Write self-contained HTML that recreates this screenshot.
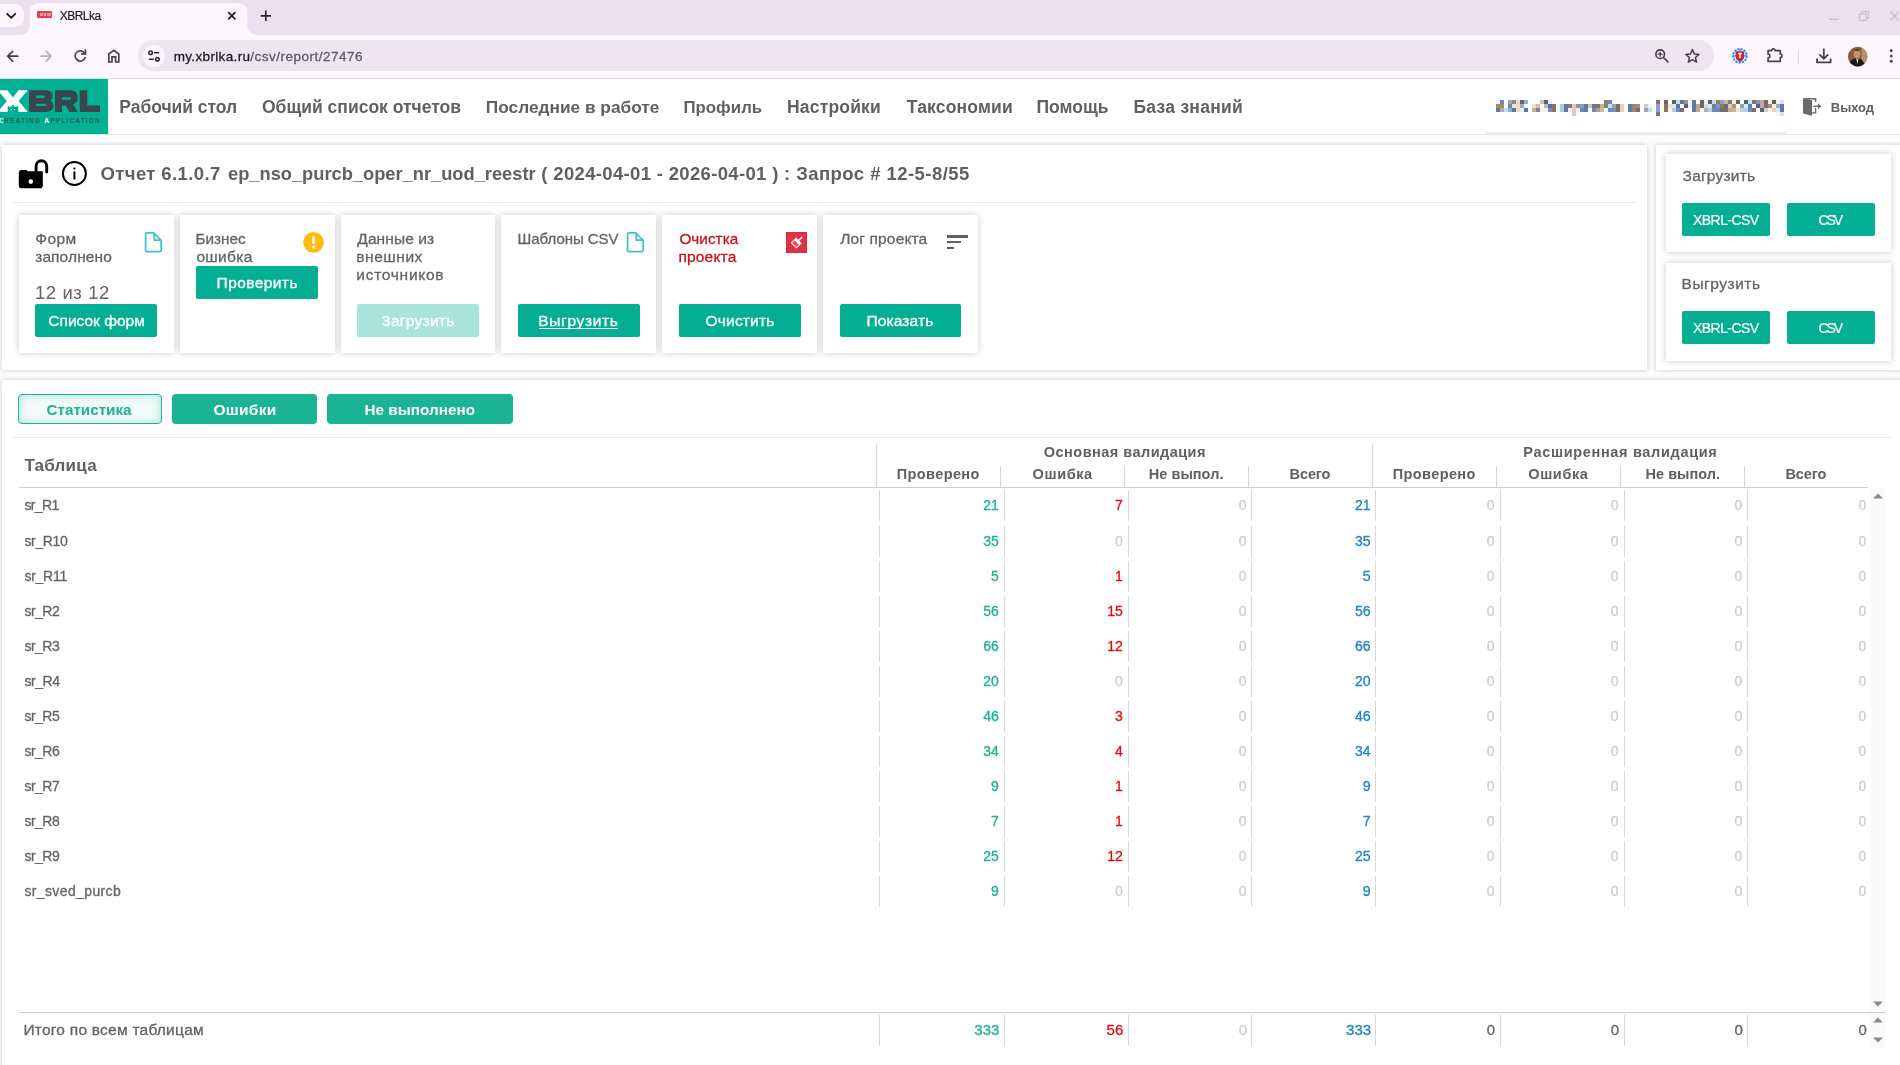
<!DOCTYPE html>
<html lang="ru"><head><meta charset="utf-8"><title>XBRLka</title>
<style>
html,body{margin:0;padding:0}
body{width:1900px;height:1065px;overflow:hidden;position:relative;background:#fdfdfd;
 font-family:"Liberation Sans",sans-serif;}
.t{position:absolute;white-space:nowrap;line-height:1;}
#root{position:absolute;left:0;top:0;width:1900px;height:1065px;will-change:transform}
.abs{position:absolute}
svg{position:absolute;overflow:visible}
.card{position:absolute;background:#fff;box-shadow:0 0 7px rgba(0,0,0,.21)}
.panel{position:absolute;background:#fff;box-shadow:0 0 5px rgba(0,0,0,.21)}
.btn{position:absolute;background:#03ae93;border-radius:2px}
</style></head>
<body>
<div id="root">
<!-- browser chrome -->
<div style="position:absolute;left:0px;top:0px;width:1900px;height:34.8px;background:#ebe0f0"></div>
<div style="position:absolute;left:0px;top:34.8px;width:1900px;height:43.7px;background:#fcf7fe"></div>
<div style="position:absolute;left:0px;top:78px;width:1900px;height:1px;background:#e4dbe8"></div>
<div style="position:absolute;left:-8px;top:3.5px;width:31.5px;height:23.5px;background:#fcf7fe;border-radius:9px"></div>
<svg style="left:0;top:0" width="30" height="34"><path d="M7.2 13.8 L11.2 17.8 L15.2 13.8" fill="none" stroke="#1f1b22" stroke-width="1.9" stroke-linecap="round" stroke-linejoin="round"/></svg>
<svg style="left:0;top:0" width="300" height="36"><path d="M19.5 34.9 C25.5 34.9 29.7 31.4 29.7 25.9 L29.7 12 C29.7 6.5 33.5 3 39 3 L238 3 C243.5 3 247.3 6.5 247.3 12 L247.3 25.9 C247.3 31.4 251.5 34.9 257.5 34.9 Z" fill="#fcf7fe"/></svg>
<div style="position:absolute;left:36.9px;top:11.3px;width:15.2px;height:6.3px;background:#e2404e;border-radius:1.2px"></div>
<div style="position:absolute;left:39.6px;top:12.9px;width:3.4px;height:3.6px;background:#f3a6ad;opacity:.85"></div>
<div style="position:absolute;left:43.9px;top:12.9px;width:2.2px;height:3.6px;background:#f6c2c7;opacity:.9"></div>
<div style="position:absolute;left:47px;top:12.9px;width:3.6px;height:3.6px;background:#f1979f;opacity:.85"></div>
<div style="position:absolute;left:37.7px;top:18.2px;width:1.3px;height:1.3px;background:#a9afb8;border-radius:.6px"></div>
<div style="position:absolute;left:41.7px;top:18.2px;width:1.3px;height:1.3px;background:#a9afb8;border-radius:.6px"></div>
<div style="position:absolute;left:45.6px;top:18.2px;width:1.3px;height:1.3px;background:#a9afb8;border-radius:.6px"></div>
<div style="position:absolute;left:49.6px;top:18.2px;width:1.3px;height:1.3px;background:#a9afb8;border-radius:.6px"></div>
<span class="t" style="left:59.80px;top:10px;font-size:12px;color:#1f1b22;letter-spacing:-0.550px;-webkit-text-stroke:.2px #1f1b22;">XBRLka</span>
<svg style="left:0;top:0" width="260" height="34"><path d="M228.2 12.2 L235.4 19.4 M235.4 12.2 L228.2 19.4" stroke="#1f1b22" stroke-width="1.7" stroke-linecap="butt"/></svg>
<svg style="left:0;top:0" width="300" height="34"><path d="M260.6 15.8 H271 M265.8 10.6 V21" stroke="#2a252d" stroke-width="1.7"/></svg>
<svg style="left:0;top:0" width="1900" height="34" fill="none" stroke="#c9c1cd" stroke-width="1.3"><path d="M1829 19.3 H1839"/><path d="M1859.5 13.8 H1866 V20.3 H1859.5 Z M1862 13.5 V11.5 H1868.5 V18 H1866.3"/><path d="M1890.3 11.8 L1899 20.4 M1899 11.8 L1890.3 20.4" stroke-width="1.5"/></svg>
<svg style="left:0;top:34px" width="140" height="44" fill="none" stroke-linecap="round" stroke-linejoin="round"><path d="M17.8 22.2 H7.8 M12.6 17.3 L7.6 22.2 L12.6 27.1" stroke="#474049" stroke-width="1.7"/><path d="M41 22.2 H51 M46.2 17.3 L51.2 22.2 L46.2 27.1" stroke="#b7afbb" stroke-width="1.7"/><path d="M84.7 19.4 A5.1 5.1 0 1 0 85.1 23.6" stroke="#474049" stroke-width="1.7"/><path d="M85.5 16.2 V19.9 H81.8" stroke="#474049" stroke-width="1.7"/><path d="M108.8 28 V20 L113.8 16.2 L118.8 20 V28 H115.6 V22.8 H112 V28 Z" stroke="#474049" stroke-width="1.7" stroke-linejoin="miter"/></svg>
<div style="position:absolute;left:138.3px;top:40.4px;width:1575.6px;height:30.2px;background:#ede5f2;border-radius:15.1px"></div>
<div style="position:absolute;left:142.5px;top:45.2px;width:22px;height:22px;background:#fcf7fe;border-radius:11px"></div>
<svg style="left:142.5px;top:45.2px" width="22" height="22" fill="none" stroke="#2a252d" stroke-width="1.5" stroke-linecap="round"><circle cx="7.6" cy="7.8" r="1.8"/><path d="M11.6 7.8 H15.6"/><circle cx="14.4" cy="14.2" r="1.8"/><path d="M6.4 14.2 H10.4"/></svg>
<span class="t" style="left:173.70px;top:50px;font-size:13.5px;color:#1f1b22;-webkit-text-stroke:.3px #1f1b22;letter-spacing:0.345px;">my.xbrlka.ru</span>
<span class="t" style="left:250.30px;top:50px;font-size:13.5px;color:#5f5a63;-webkit-text-stroke:.3px #5f5a63;letter-spacing:0.487px;">/csv/report/27476</span>
<svg style="left:1650px;top:44px" width="24" height="24" fill="none" stroke="#474049" stroke-width="1.6" stroke-linecap="round"><circle cx="10.2" cy="10.2" r="4.3"/><path d="M13.5 13.5 L17.9 17.9"/><path d="M8.2 10.2 H12.2 M10.2 8.2 V12.2" stroke-width="1.3"/></svg>
<svg style="left:1680px;top:44px" width="24" height="24" fill="none" stroke="#474049" stroke-width="1.5" stroke-linejoin="round"><path d="M12.4 5.5 L14.3 9.9 L19 10.4 L15.4 13.5 L16.5 18.2 L12.4 15.7 L8.3 18.2 L9.4 13.5 L5.8 10.4 L10.5 9.9 Z"/></svg>
<svg style="left:1730px;top:46px" width="20" height="20"><circle cx="9.9" cy="9.8" r="6.9" fill="#dff0ff" stroke="#1c8ef4" stroke-width="1.8" stroke-dasharray="2.2 1.1"/><path d="M3 9.8 H17 M9.9 3 V17" stroke="#1c8ef4" stroke-width="1.2"/><path d="M5.6 5.2 H14.2 V10.2 C14.2 13.2 12.2 14.8 9.9 15.8 C7.6 14.8 5.6 13.2 5.6 10.2 Z" fill="#d51f2d"/><path d="M8 7.6 H11.8 M9.9 7.6 V12.2" stroke="#fff" stroke-width="1.5"/></svg>
<svg style="left:1764px;top:46px" width="20" height="20" fill="none" stroke="#474049" stroke-width="1.7" stroke-linejoin="round"><path d="M4.1 4.6 H7.8 C7.8 2.2 11 2.2 11 4.6 H16.2 V8 C18.6 8 18.6 11.6 16.2 11.6 V15.4 H4.1 V11.8 C6.4 11.8 6.4 8 4.1 8 Z"/></svg>
<div style="position:absolute;left:1798px;top:49px;width:1.2px;height:14.5px;background:#e3cdf0"></div>
<svg style="left:1813px;top:45px" width="22" height="22" fill="none" stroke="#474049" stroke-width="1.8" stroke-linejoin="round"><path d="M10.8 3.4 V13.6 M6.4 9.4 L10.8 13.8 L15.2 9.4"/><path d="M4 13.6 V17.4 H17.6 V13.6"/></svg>
<svg style="left:1847px;top:46px" width="22" height="22"><defs><clipPath id="av"><circle cx="10.7" cy="10.6" r="9.8"/></clipPath></defs><g clip-path="url(#av)"><rect width="22" height="22" fill="#8a5a3c"/><rect x="14.5" y="0" width="8" height="22" fill="#b8916c"/><ellipse cx="10" cy="8" rx="3.4" ry="4.2" fill="#c8906c"/><path d="M6.5 6 C7 2.5 13 2.5 13.5 6 L13 4.8 L7 4.8Z" fill="#3a2418"/><path d="M1 22 C2 14 6 12.5 10 12.5 C14 12.5 17 14 18 22 Z" fill="#1c1513"/><path d="M9.2 12.6 L10.4 18 L11.6 12.8Z" fill="#e8e2da"/></g></svg>
<svg style="left:1885px;top:46px" width="12" height="22" fill="#474049"><circle cx="6.2" cy="4.8" r="1.45"/><circle cx="6.2" cy="10.1" r="1.45"/><circle cx="6.2" cy="15.3" r="1.45"/></svg>
<!-- site header -->
<div style="position:absolute;left:0px;top:79px;width:1900px;height:55.5px;background:#fff"></div>
<div style="position:absolute;left:0px;top:134px;width:1900px;height:1px;background:#e4e6e8"></div>
<div style="position:absolute;left:0px;top:78.8px;width:108px;height:55.2px;background:#00b092"></div>
<svg style="left:0;top:0" width="110" height="136"><path d="M-2.4 90.2 H7.4 L13 97.6 L18.4 90.2 H27.8 L18.7 101.1 L27.8 112 H18.4 L13 104.6 L7.4 112 H-2.4 L6.9 101.1 Z" fill="#fff"/><path d="M7.7 112 V105.4 L10 107 H15.8 L18.3 105.4 V112 Z" fill="#00b092"/><circle cx="11.4" cy="109.6" r=".6" fill="#fff"/><circle cx="14.4" cy="109.6" r=".6" fill="#fff"/><path fill-rule="evenodd" d="M29 90.2 H45.5 C50.2 90.2 52.6 92.6 52.6 95.8 C52.6 98 51.6 99.6 49.8 100.5 C52.2 101.3 53.5 103.2 53.5 105.8 C53.5 109.6 50.8 112 46 112 H29 Z M36 95.6 H44 C45.2 95.6 45.2 97.9 44 97.9 H36 Z M36 103.8 H45 C46.4 103.8 46.4 106.1 45 106.1 H36 Z" fill="#37474f"/><path fill-rule="evenodd" d="M55 90.2 H70.4 C75.4 90.2 77.8 93.6 77.8 97.6 C77.8 101 76.2 103.4 73.2 104.5 L78 112 H69.6 L65.6 105.4 H62 V112 H55 Z M62 97.2 H70 C71.6 97.2 71.6 99.8 70 99.8 H62 Z" fill="#37474f"/><path d="M79.7 90.2 H87.3 V105.4 H100 V112 H79.7 Z" fill="#37474f"/></svg>
<span class="t" style="left:-0.80px;top:118px;font-size:6.4px;color:#e9f7f4;font-weight:700;">C</span>
<span class="t" style="left:4.00px;top:118px;font-size:6.5px;color:#2f5a55;font-weight:700;letter-spacing:1.215px;">REATING</span>
<span class="t" style="left:44.20px;top:118px;font-size:6.8px;color:#ffffff;font-weight:700;">A</span>
<span class="t" style="left:50.50px;top:118px;font-size:6.5px;color:#2f5a55;font-weight:700;letter-spacing:1.146px;">PPLICATION</span>
<span class="t" style="left:119.30px;top:99px;font-size:17.5px;color:#5e6163;font-weight:700;letter-spacing:-0.037px;">Рабочий стол</span>
<span class="t" style="left:262.00px;top:99px;font-size:17.5px;color:#5e6163;font-weight:700;letter-spacing:0.006px;">Общий список отчетов</span>
<span class="t" style="left:485.80px;top:99px;font-size:17.25px;color:#5e6163;font-weight:700;letter-spacing:0.016px;">Последние в работе</span>
<span class="t" style="left:683.50px;top:100px;font-size:16.75px;color:#5e6163;font-weight:700;letter-spacing:0.034px;">Профиль</span>
<span class="t" style="left:787.00px;top:99px;font-size:17.5px;color:#5e6163;font-weight:700;letter-spacing:0.179px;">Настройки</span>
<span class="t" style="left:906.80px;top:99px;font-size:17.5px;color:#5e6163;font-weight:700;letter-spacing:0.170px;">Таксономии</span>
<span class="t" style="left:1036.50px;top:99px;font-size:17.5px;color:#5e6163;font-weight:700;letter-spacing:0.019px;">Помощь</span>
<span class="t" style="left:1133.50px;top:99px;font-size:17.5px;color:#5e6163;font-weight:700;letter-spacing:0.258px;">База знаний</span>
<svg style="left:0;top:0" width="1900" height="136" shape-rendering="crispEdges"><rect x="1496" y="100" width="4" height="4" fill="#fdf0dc"/><rect x="1500" y="100" width="4" height="4" fill="#6c8ab3"/><rect x="1508" y="100" width="4" height="4" fill="#8fabd0"/><rect x="1512" y="100" width="4" height="4" fill="#a2866f"/><rect x="1516" y="100" width="4" height="4" fill="#f0d9bd"/><rect x="1520" y="100" width="4" height="4" fill="#5f646c"/><rect x="1524" y="100" width="4" height="4" fill="#8fb0d8"/><rect x="1540" y="100" width="4" height="4" fill="#d9bfa3"/><rect x="1544" y="100" width="4" height="4" fill="#5f646c"/><rect x="1548" y="100" width="4" height="4" fill="#e1eefa"/><rect x="1604" y="100" width="4" height="4" fill="#8a8078"/><rect x="1608" y="100" width="4" height="4" fill="#6c8db1"/><rect x="1656" y="100" width="4" height="4" fill="#8e7168"/><rect x="1664" y="100" width="4" height="4" fill="#6b6465"/><rect x="1672" y="100" width="4" height="4" fill="#5d5f63"/><rect x="1676" y="100" width="4" height="4" fill="#c6dbf1"/><rect x="1680" y="100" width="4" height="4" fill="#7a736f"/><rect x="1684" y="100" width="4" height="4" fill="#8298b6"/><rect x="1688" y="100" width="4" height="4" fill="#fdf6ea"/><rect x="1692" y="100" width="4" height="4" fill="#62799e"/><rect x="1696" y="100" width="4" height="4" fill="#fffcf5"/><rect x="1700" y="100" width="4" height="4" fill="#6b6869"/><rect x="1704" y="100" width="4" height="4" fill="#dff3fd"/><rect x="1708" y="100" width="4" height="4" fill="#5f6367"/><rect x="1712" y="100" width="4" height="4" fill="#c3daf1"/><rect x="1716" y="100" width="4" height="4" fill="#8b7869"/><rect x="1720" y="100" width="4" height="4" fill="#86a1c4"/><rect x="1724" y="100" width="4" height="4" fill="#cfb59b"/><rect x="1728" y="100" width="4" height="4" fill="#6b8099"/><rect x="1732" y="100" width="4" height="4" fill="#fbeedc"/><rect x="1736" y="100" width="4" height="4" fill="#5f6873"/><rect x="1744" y="100" width="4" height="4" fill="#5d6165"/><rect x="1748" y="100" width="4" height="4" fill="#cfe2f5"/><rect x="1752" y="100" width="4" height="4" fill="#7d746e"/><rect x="1756" y="100" width="4" height="4" fill="#8094b0"/><rect x="1760" y="100" width="4" height="4" fill="#c4a78c"/><rect x="1764" y="100" width="4" height="4" fill="#5f7080"/><rect x="1768" y="100" width="4" height="4" fill="#fbe9da"/><rect x="1772" y="100" width="4" height="4" fill="#58626b"/><rect x="1776" y="100" width="4" height="4" fill="#f6f1e1"/><rect x="1780" y="100" width="4" height="4" fill="#cfe3f6"/><rect x="1496" y="104" width="4" height="4" fill="#a2866f"/><rect x="1500" y="104" width="4" height="4" fill="#a88c75"/><rect x="1508" y="104" width="4" height="4" fill="#7f858a"/><rect x="1512" y="104" width="4" height="4" fill="#d4ebfb"/><rect x="1516" y="104" width="4" height="4" fill="#f0d9bd"/><rect x="1520" y="104" width="4" height="4" fill="#a3adb6"/><rect x="1524" y="104" width="4" height="4" fill="#f0f8fe"/><rect x="1532" y="104" width="4" height="4" fill="#f3e2cf"/><rect x="1536" y="104" width="4" height="4" fill="#d3bda4"/><rect x="1540" y="104" width="4" height="4" fill="#fbfbfb"/><rect x="1544" y="104" width="4" height="4" fill="#b5b9bd"/><rect x="1548" y="104" width="4" height="4" fill="#5f6f94"/><rect x="1552" y="104" width="4" height="4" fill="#8e6f5e"/><rect x="1556" y="104" width="4" height="4" fill="#fdf6e8"/><rect x="1560" y="104" width="4" height="4" fill="#a9c8ea"/><rect x="1564" y="104" width="4" height="4" fill="#677791"/><rect x="1568" y="104" width="4" height="4" fill="#80787a"/><rect x="1572" y="104" width="4" height="4" fill="#e8c9ab"/><rect x="1576" y="104" width="4" height="4" fill="#8a99a5"/><rect x="1580" y="104" width="4" height="4" fill="#7f9fc9"/><rect x="1584" y="104" width="4" height="4" fill="#647a9b"/><rect x="1588" y="104" width="4" height="4" fill="#b9c8d6"/><rect x="1592" y="104" width="4" height="4" fill="#6e7686"/><rect x="1596" y="104" width="4" height="4" fill="#7a7274"/><rect x="1600" y="104" width="4" height="4" fill="#cdb08f"/><rect x="1604" y="104" width="4" height="4" fill="#8a8078"/><rect x="1608" y="104" width="4" height="4" fill="#c4dcf3"/><rect x="1612" y="104" width="4" height="4" fill="#a39fa5"/><rect x="1616" y="104" width="4" height="4" fill="#7a6f6e"/><rect x="1620" y="104" width="4" height="4" fill="#ecd2b6"/><rect x="1624" y="104" width="4" height="4" fill="#f2fbfe"/><rect x="1628" y="104" width="4" height="4" fill="#5f7aa3"/><rect x="1632" y="104" width="4" height="4" fill="#9c806c"/><rect x="1636" y="104" width="4" height="4" fill="#a78a70"/><rect x="1640" y="104" width="4" height="4" fill="#fafcfb"/><rect x="1644" y="104" width="4" height="4" fill="#cfd3cc"/><rect x="1648" y="104" width="4" height="4" fill="#eef9fe"/><rect x="1656" y="104" width="4" height="4" fill="#86a4cb"/><rect x="1660" y="104" width="4" height="4" fill="#fff5ec"/><rect x="1664" y="104" width="4" height="4" fill="#8e7465"/><rect x="1668" y="104" width="4" height="4" fill="#f8e3c8"/><rect x="1672" y="104" width="4" height="4" fill="#d5edfb"/><rect x="1676" y="104" width="4" height="4" fill="#5f74a0"/><rect x="1684" y="104" width="4" height="4" fill="#5f5f75"/><rect x="1688" y="104" width="4" height="4" fill="#f2edf0"/><rect x="1692" y="104" width="4" height="4" fill="#62799e"/><rect x="1696" y="104" width="4" height="4" fill="#c4a587"/><rect x="1700" y="104" width="4" height="4" fill="#686b6e"/><rect x="1704" y="104" width="4" height="4" fill="#e2d9c6"/><rect x="1708" y="104" width="4" height="4" fill="#d5edfc"/><rect x="1712" y="104" width="4" height="4" fill="#6480a8"/><rect x="1716" y="104" width="4" height="4" fill="#7c9cc4"/><rect x="1720" y="104" width="4" height="4" fill="#94755f"/><rect x="1724" y="104" width="4" height="4" fill="#62678a"/><rect x="1728" y="104" width="4" height="4" fill="#e9c9a8"/><rect x="1732" y="104" width="4" height="4" fill="#a39a80"/><rect x="1736" y="104" width="4" height="4" fill="#fffdf6"/><rect x="1740" y="104" width="4" height="4" fill="#969ea6"/><rect x="1744" y="104" width="4" height="4" fill="#d0ebfb"/><rect x="1748" y="104" width="4" height="4" fill="#6480ab"/><rect x="1756" y="104" width="4" height="4" fill="#626177"/><rect x="1760" y="104" width="4" height="4" fill="#c4a78c"/><rect x="1764" y="104" width="4" height="4" fill="#6c7380"/><rect x="1768" y="104" width="4" height="4" fill="#a8896c"/><rect x="1772" y="104" width="4" height="4" fill="#fdf1dd"/><rect x="1776" y="104" width="4" height="4" fill="#93b2d8"/><rect x="1780" y="104" width="4" height="4" fill="#62799e"/><rect x="1496" y="108" width="4" height="4" fill="#62799a"/><rect x="1500" y="108" width="4" height="4" fill="#b0aba3"/><rect x="1504" y="108" width="4" height="4" fill="#c3dcf3"/><rect x="1508" y="108" width="4" height="4" fill="#8eabd0"/><rect x="1512" y="108" width="4" height="4" fill="#5d7596"/><rect x="1516" y="108" width="4" height="4" fill="#f0d9bd"/><rect x="1520" y="108" width="4" height="4" fill="#dff2fd"/><rect x="1524" y="108" width="4" height="4" fill="#5e7aa6"/><rect x="1532" y="108" width="4" height="4" fill="#c8ae94"/><rect x="1536" y="108" width="4" height="4" fill="#888090"/><rect x="1540" y="108" width="4" height="4" fill="#f3efee"/><rect x="1544" y="108" width="4" height="4" fill="#fbeee4"/><rect x="1548" y="108" width="4" height="4" fill="#7391b7"/><rect x="1552" y="108" width="4" height="4" fill="#8e705f"/><rect x="1556" y="108" width="4" height="4" fill="#fdf6e8"/><rect x="1560" y="108" width="4" height="4" fill="#a9c8ea"/><rect x="1564" y="108" width="4" height="4" fill="#637c9e"/><rect x="1568" y="108" width="4" height="4" fill="#f3eeec"/><rect x="1572" y="108" width="4" height="4" fill="#e8c9ab"/><rect x="1576" y="108" width="4" height="4" fill="#dff2fd"/><rect x="1580" y="108" width="4" height="4" fill="#6d8bb3"/><rect x="1584" y="108" width="4" height="4" fill="#5f7ba5"/><rect x="1592" y="108" width="4" height="4" fill="#6f8aac"/><rect x="1596" y="108" width="4" height="4" fill="#b59a82"/><rect x="1600" y="108" width="4" height="4" fill="#d7b999"/><rect x="1604" y="108" width="4" height="4" fill="#eaf5fd"/><rect x="1608" y="108" width="4" height="4" fill="#7290b6"/><rect x="1612" y="108" width="4" height="4" fill="#7494b6"/><rect x="1616" y="108" width="4" height="4" fill="#7f6c66"/><rect x="1620" y="108" width="4" height="4" fill="#ecd2b6"/><rect x="1624" y="108" width="4" height="4" fill="#f2fbfe"/><rect x="1628" y="108" width="4" height="4" fill="#5f7aa3"/><rect x="1632" y="108" width="4" height="4" fill="#9c806c"/><rect x="1636" y="108" width="4" height="4" fill="#7a6c6c"/><rect x="1644" y="108" width="4" height="4" fill="#94abc0"/><rect x="1648" y="108" width="4" height="4" fill="#c6ddf3"/><rect x="1656" y="108" width="4" height="4" fill="#86a4cb"/><rect x="1664" y="108" width="4" height="4" fill="#8e7465"/><rect x="1668" y="108" width="4" height="4" fill="#fdf0dd"/><rect x="1672" y="108" width="4" height="4" fill="#b5d0eb"/><rect x="1676" y="108" width="4" height="4" fill="#6c8cb2"/><rect x="1680" y="108" width="4" height="4" fill="#7d6e6c"/><rect x="1692" y="108" width="4" height="4" fill="#62799e"/><rect x="1696" y="108" width="4" height="4" fill="#c8a98a"/><rect x="1700" y="108" width="4" height="4" fill="#f2f5ee"/><rect x="1704" y="108" width="4" height="4" fill="#a0b4c4"/><rect x="1708" y="108" width="4" height="4" fill="#b5d0eb"/><rect x="1712" y="108" width="4" height="4" fill="#6e8db3"/><rect x="1716" y="108" width="4" height="4" fill="#6a8ab0"/><rect x="1720" y="108" width="4" height="4" fill="#756d70"/><rect x="1724" y="108" width="4" height="4" fill="#7b6a70"/><rect x="1728" y="108" width="4" height="4" fill="#c9a98b"/><rect x="1732" y="108" width="4" height="4" fill="#d4b296"/><rect x="1736" y="108" width="4" height="4" fill="#ece5d0"/><rect x="1740" y="108" width="4" height="4" fill="#bccdd9"/><rect x="1744" y="108" width="4" height="4" fill="#b3cfeb"/><rect x="1748" y="108" width="4" height="4" fill="#6e8db3"/><rect x="1752" y="108" width="4" height="4" fill="#7a6e6e"/><rect x="1760" y="108" width="4" height="4" fill="#5b6184"/><rect x="1764" y="108" width="4" height="4" fill="#ebc9a8"/><rect x="1768" y="108" width="4" height="4" fill="#eef7fc"/><rect x="1772" y="108" width="4" height="4" fill="#e8d2b8"/><rect x="1776" y="108" width="4" height="4" fill="#d5ebfb"/><rect x="1780" y="108" width="4" height="4" fill="#62799e"/><rect x="1572" y="112" width="4" height="4" fill="#e8c9ab"/><rect x="1576" y="112" width="4" height="4" fill="#eefaff"/><rect x="1656" y="112" width="4" height="4" fill="#8b716a"/><rect x="1776" y="112" width="4" height="4" fill="#fdf1e1"/><rect x="1780" y="112" width="4" height="4" fill="#cfe2f4"/></svg>
<div style="position:absolute;left:1485px;top:132px;width:302px;height:2px;background:#eeeeef"></div>
<svg style="left:1800px;top:95px" width="24" height="24"><path d="M3 3.1 H16.3 V6.9 H14.9 V4.4 H8.6 Z M14.9 13 H16.3 V18.5 H12 V17.2 H14.9 Z" fill="#676a6c"/><path d="M3 3.1 L12 5.2 V20.8 L3 18.5 Z" fill="#676a6c"/><path d="M13.6 10.5 H18 V8.2 L21.2 11.2 L18 14.2 V11.9 H13.6 Z" fill="#676a6c"/></svg>
<span class="t" style="left:1830.80px;top:101px;font-size:13px;color:#5e6163;font-weight:700;letter-spacing:-0.042px;">Выход</span>
<!-- report panel -->
<div class="panel" style="left:2px;top:145px;width:1645px;height:225px"></div>
<div class="panel" style="left:1656px;top:145px;width:260px;height:225px"></div>
<svg style="left:0;top:0" width="100" height="200"><path d="M36.1 173 V166.1 A5.3 5.3 0 0 1 46.7 166.1 V172" fill="none" stroke="#000" stroke-width="2.9" stroke-linecap="round"/><path fill-rule="evenodd" d="M21.8 169.9 H26.6 L27.6 171.2 H42.8 V185.4 A2.8 2.8 0 0 1 40 188.2 H21.6 A2.8 2.8 0 0 1 18.8 185.4 V172.9 A3 3 0 0 1 21.8 169.9 Z M30.8 179.3 A2.3 2.3 0 1 0 30.8 183.9 A2.3 2.3 0 1 0 30.8 179.3 Z" fill="#000"/><circle cx="74.4" cy="173.5" r="11.5" fill="none" stroke="#000" stroke-width="2"/><circle cx="74.4" cy="168.6" r="1.15" fill="#000"/><path d="M74.4 171.4 V179.4" stroke="#000" stroke-width="2"/></svg>
<span class="t" style="left:100.50px;top:165px;font-size:18.5px;color:#5e6163;font-weight:700;letter-spacing:0.398px;">Отчет 6.1.0.7</span>
<span class="t" style="left:228.00px;top:165px;font-size:18.25px;color:#5e6163;font-weight:700;letter-spacing:0.010px;">ep_nso_purcb_oper_nr_uod_reestr</span>
<span class="t" style="left:541.30px;top:165px;font-size:18.5px;color:#5e6163;font-weight:700;letter-spacing:0.337px;">( 2024-04-01 - 2026-04-01 )</span>
<span class="t" style="left:784.00px;top:165px;font-size:18.5px;color:#5e6163;font-weight:700;letter-spacing:0.449px;">: Запрос # 12-5-8/55</span>
<div style="position:absolute;left:13px;top:202px;width:1624px;height:1px;background:#e7eaec"></div>
<div class="card" style="left:19px;top:215px;width:154.8px;height:138px"></div>
<div class="card" style="left:179.8px;top:215px;width:154.8px;height:138px"></div>
<div class="card" style="left:340.6px;top:215px;width:154.8px;height:138px"></div>
<div class="card" style="left:501.4px;top:215px;width:154.8px;height:138px"></div>
<div class="card" style="left:662.2px;top:215px;width:154.8px;height:138px"></div>
<div class="card" style="left:823px;top:215px;width:154.8px;height:138px"></div>
<span class="t" style="left:35.20px;top:231px;font-size:15.5px;color:#616466;-webkit-text-stroke:.3px #616466;letter-spacing:0.425px;">Форм</span>
<span class="t" style="left:35.20px;top:249px;font-size:15.5px;color:#616466;-webkit-text-stroke:.3px #616466;letter-spacing:0.102px;">заполнено</span>
<svg style="left:144px;top:231.2px" width="20" height="24" fill="none" stroke="#3dc2cc" stroke-width="1.8" stroke-linejoin="round"><path d="M1.6 3.4 Q1.6 1.9 3.1 1.9 H9.6 L17.2 9.4 V19.1 Q17.2 20.6 15.7 20.6 H3.1 Q1.6 20.6 1.6 19.1 Z"/><path d="M10.3 2.2 V9.2 H17"/></svg>
<span class="t" style="left:35.00px;top:284px;font-size:18.5px;color:#616466;letter-spacing:0.577px;-webkit-text-stroke:0 #fff;">12 из 12</span>
<div class="btn" style="left:35px;top:304.25px;width:122px;height:32.5px;"></div>
<span class="t" style="left:48.30px;top:313px;font-size:15.5px;color:#fff;-webkit-text-stroke:0.32px #fff;">Список форм</span>
<span class="t" style="left:195.40px;top:231px;font-size:15.25px;color:#616466;-webkit-text-stroke:.3px #616466;letter-spacing:0.056px;">Бизнес</span>
<span class="t" style="left:196.40px;top:249px;font-size:15.5px;color:#616466;-webkit-text-stroke:.3px #616466;letter-spacing:0.337px;">ошибка</span>
<svg style="left:300px;top:229px" width="26" height="26"><circle cx="13.5" cy="13.3" r="10.4" fill="#fdbd10"/><path d="M12.2 7.2 H14.8 V14.8 H12.2 Z M12.2 16.8 H14.8 V19.4 H12.2 Z" fill="#fff"/></svg>
<div class="btn" style="left:196px;top:266.25px;width:122px;height:32.5px;"></div>
<span class="t" style="left:216.60px;top:275px;font-size:15.5px;color:#fff;letter-spacing:0.420px;-webkit-text-stroke:0.32px #fff;">Проверить</span>
<span class="t" style="left:357.30px;top:231px;font-size:15.5px;color:#616466;-webkit-text-stroke:.3px #616466;letter-spacing:0.105px;">Данные из</span>
<span class="t" style="left:356.30px;top:249px;font-size:15.5px;color:#616466;-webkit-text-stroke:.3px #616466;letter-spacing:0.539px;">внешних</span>
<span class="t" style="left:356.30px;top:267px;font-size:15.5px;color:#616466;-webkit-text-stroke:.3px #616466;letter-spacing:0.724px;">источников</span>
<div class="btn" style="left:357px;top:304.25px;width:122px;height:32.5px;background:#a8e4d9;"></div>
<span class="t" style="left:381.30px;top:313px;font-size:15.5px;color:#fff;letter-spacing:0.275px;-webkit-text-stroke:0.32px #fff;">Загрузить</span>
<span class="t" style="left:517.60px;top:231px;font-size:15px;color:#616466;-webkit-text-stroke:.3px #616466;letter-spacing:-0.034px;">Шаблоны CSV</span>
<svg style="left:626px;top:231.2px" width="20" height="24" fill="none" stroke="#3dc2cc" stroke-width="1.8" stroke-linejoin="round"><path d="M1.6 3.4 Q1.6 1.9 3.1 1.9 H9.6 L17.2 9.4 V19.1 Q17.2 20.6 15.7 20.6 H3.1 Q1.6 20.6 1.6 19.1 Z"/><path d="M10.3 2.2 V9.2 H17"/></svg>
<div class="btn" style="left:518px;top:304.25px;width:122px;height:32.5px;"></div>
<span class="t" style="left:538.30px;top:313px;font-size:15.5px;color:#fff;letter-spacing:0.651px;-webkit-text-stroke:0.32px #fff;">Выгрузить</span>
<div style="position:absolute;left:539.3px;top:327.6px;width:78.4px;height:1.2px;background:#fff"></div>
<span class="t" style="left:679.40px;top:231px;font-size:15.25px;color:#c7121a;-webkit-text-stroke:.3px #c7121a;letter-spacing:0.060px;">Очистка</span>
<span class="t" style="left:678.40px;top:249px;font-size:15.5px;color:#c7121a;-webkit-text-stroke:.3px #c7121a;letter-spacing:0.194px;">проекта</span>
<div style="position:absolute;left:786px;top:232px;width:21px;height:21px;background:#dc3446;box-shadow:inset 0 0 0 .6px #d92538"></div>
<svg style="left:786px;top:232px" width="21" height="21"><g transform="translate(10.9 10.3) rotate(45)"><rect x="-0.75" y="-7.4" width="1.5" height="5.2" fill="#fff"/><rect x="-4" y="-2.8" width="8" height="2.6" fill="#fff"/><rect x="-3.5" y="-0.2" width="7" height="4.4" fill="none" stroke="#fff" stroke-width="1"/><rect x="-3" y="0.5" width="6" height="3.2" fill="#fff" opacity=".12"/></g></svg>
<div class="btn" style="left:679px;top:304.25px;width:122px;height:32.5px;"></div>
<span class="t" style="left:705.60px;top:313px;font-size:15.5px;color:#fff;letter-spacing:0.172px;-webkit-text-stroke:0.32px #fff;">Очистить</span>
<span class="t" style="left:840.20px;top:231px;font-size:15.5px;color:#616466;-webkit-text-stroke:.3px #616466;letter-spacing:0.151px;">Лог проекта</span>
<div style="position:absolute;left:947.2px;top:235.4px;width:20.8px;height:2.2px;background:#5f6163"></div>
<div style="position:absolute;left:947.2px;top:241.3px;width:13.6px;height:2.2px;background:#5f6163"></div>
<div style="position:absolute;left:947.2px;top:247.2px;width:6.8px;height:2.2px;background:#5f6163"></div>
<div class="btn" style="left:840px;top:304.25px;width:121px;height:32.5px;"></div>
<span class="t" style="left:866.60px;top:313px;font-size:15.5px;color:#fff;letter-spacing:0.112px;-webkit-text-stroke:0.32px #fff;">Показать</span>
<div class="card" style="left:1666px;top:154px;width:225px;height:98px"></div>
<div class="card" style="left:1666px;top:263px;width:225px;height:98px"></div>
<span class="t" style="left:1682.60px;top:168px;font-size:15.5px;color:#616466;-webkit-text-stroke:.3px #616466;letter-spacing:0.213px;">Загрузить</span>
<div class="btn" style="left:1682px;top:203.25px;width:88px;height:32.5px;"></div>
<span class="t" style="left:1693.10px;top:213px;font-size:14px;color:#fff;letter-spacing:-0.583px;-webkit-text-stroke:0.2px #fff;">XBRL-CSV</span>
<div class="btn" style="left:1787px;top:203.25px;width:88px;height:32.5px;"></div>
<span class="t" style="left:1818.60px;top:213px;font-size:14px;color:#fff;letter-spacing:-2.174px;-webkit-text-stroke:0.2px #fff;">CSV</span>
<span class="t" style="left:1681.60px;top:276px;font-size:15.5px;color:#616466;-webkit-text-stroke:.3px #616466;letter-spacing:0.526px;">Выгрузить</span>
<div class="btn" style="left:1682px;top:311.25px;width:88px;height:32.5px;"></div>
<span class="t" style="left:1693.10px;top:321px;font-size:14px;color:#fff;letter-spacing:-0.583px;-webkit-text-stroke:0.2px #fff;">XBRL-CSV</span>
<div class="btn" style="left:1787px;top:311.25px;width:88px;height:32.5px;"></div>
<span class="t" style="left:1818.60px;top:321px;font-size:14px;color:#fff;letter-spacing:-2.174px;-webkit-text-stroke:0.2px #fff;">CSV</span>
<!-- statistics panel -->
<div class="panel" style="left:2px;top:380px;width:1910px;height:700px"></div>
<div style="position:absolute;left:18px;top:394px;width:144px;height:30px;box-sizing:border-box;border:1px solid #1ab394;border-radius:4px;background:#f3fbf9;box-shadow:inset 0 0 9px rgba(26,179,148,.35)"></div>
<span class="t" style="left:46.60px;top:402px;font-size:15.25px;color:#1ab394;font-weight:700;letter-spacing:-0.040px;">Статистика</span>
<div style="position:absolute;left:172px;top:394px;width:145px;height:30px;border-radius:4px;background:#1ab394"></div>
<span class="t" style="left:213.40px;top:402px;font-size:15.5px;color:#fff;font-weight:700;letter-spacing:0.293px;">Ошибки</span>
<div style="position:absolute;left:327px;top:394px;width:186px;height:30px;border-radius:4px;background:#1ab394"></div>
<span class="t" style="left:364.40px;top:402px;font-size:15.25px;color:#fff;font-weight:700;letter-spacing:0.048px;">Не выполнено</span>
<div style="position:absolute;left:13px;top:437px;width:1878px;height:1px;background:#e7eaec"></div>
<span class="t" style="left:24.40px;top:457px;font-size:17px;color:#5e6163;font-weight:700;letter-spacing:0.233px;">Таблица</span>
<div style="position:absolute;left:876px;top:444px;width:1px;height:43px;background:#d9d9d9"></div>
<div style="position:absolute;left:1000px;top:466px;width:1px;height:21px;background:#d9d9d9"></div>
<div style="position:absolute;left:1124px;top:466px;width:1px;height:21px;background:#d9d9d9"></div>
<div style="position:absolute;left:1248px;top:466px;width:1px;height:21px;background:#d9d9d9"></div>
<div style="position:absolute;left:1372px;top:444px;width:1px;height:43px;background:#d9d9d9"></div>
<div style="position:absolute;left:1496px;top:466px;width:1px;height:21px;background:#d9d9d9"></div>
<div style="position:absolute;left:1620px;top:466px;width:1px;height:21px;background:#d9d9d9"></div>
<div style="position:absolute;left:1744px;top:466px;width:1px;height:21px;background:#d9d9d9"></div>
<div style="position:absolute;left:19px;top:486.6px;width:1849px;height:1.4px;background:#cfcfcf"></div>
<span class="t" style="left:1043.80px;top:445px;font-size:14.5px;color:#5e6163;font-weight:700;letter-spacing:0.471px;">Основная валидация</span>
<span class="t" style="left:1523.30px;top:445px;font-size:14.5px;color:#5e6163;font-weight:700;letter-spacing:0.670px;">Расширенная валидация</span>
<span class="t" style="left:896.80px;top:467px;font-size:14.5px;color:#5e6163;font-weight:700;letter-spacing:0.387px;">Проверено</span>
<span class="t" style="left:1032.60px;top:467px;font-size:14.5px;color:#5e6163;font-weight:700;letter-spacing:0.602px;">Ошибка</span>
<span class="t" style="left:1148.80px;top:467px;font-size:14.5px;color:#5e6163;font-weight:700;letter-spacing:0.034px;">Не выпол.</span>
<span class="t" style="left:1289.60px;top:467px;font-size:14.5px;color:#5e6163;font-weight:700;letter-spacing:-0.112px;">Всего</span>
<span class="t" style="left:1392.80px;top:467px;font-size:14.5px;color:#5e6163;font-weight:700;letter-spacing:0.387px;">Проверено</span>
<span class="t" style="left:1528.30px;top:467px;font-size:14.5px;color:#5e6163;font-weight:700;letter-spacing:0.602px;">Ошибка</span>
<span class="t" style="left:1645.50px;top:467px;font-size:14.5px;color:#5e6163;font-weight:700;letter-spacing:0.034px;">Не выпол.</span>
<span class="t" style="left:1785.50px;top:467px;font-size:14.5px;color:#5e6163;font-weight:700;letter-spacing:-0.112px;">Всего</span>
<div style="position:absolute;left:879px;top:490px;width:1px;height:30.6px;background:#d9d9d9"></div>
<div style="position:absolute;left:1004px;top:490px;width:1px;height:30.6px;background:#d9d9d9"></div>
<div style="position:absolute;left:1128px;top:490px;width:1px;height:30.6px;background:#d9d9d9"></div>
<div style="position:absolute;left:1251px;top:490px;width:1px;height:30.6px;background:#d9d9d9"></div>
<div style="position:absolute;left:1375px;top:490px;width:1px;height:30.6px;background:#d9d9d9"></div>
<div style="position:absolute;left:1500px;top:490px;width:1px;height:30.6px;background:#d9d9d9"></div>
<div style="position:absolute;left:1624px;top:490px;width:1px;height:30.6px;background:#d9d9d9"></div>
<div style="position:absolute;left:1747px;top:490px;width:1px;height:30.6px;background:#d9d9d9"></div>
<span class="t" style="left:24.40px;top:498px;font-size:14px;color:#616466;-webkit-text-stroke:.3px #616466;letter-spacing:-0.640px;">sr_R1</span>
<span class="t" style="left:983.21px;top:498px;font-size:14px;color:#1ab394;-webkit-text-stroke:.3px #1ab394;">21</span>
<span class="t" style="left:1114.93px;top:498px;font-size:14px;color:#e30b17;-webkit-text-stroke:.3px #e30b17;">7</span>
<span class="t" style="left:1238.86px;top:498px;font-size:14px;color:#cdcdcd;-webkit-text-stroke:.3px #cdcdcd;">0</span>
<span class="t" style="left:1355.00px;top:498px;font-size:14px;color:#1c84c6;-webkit-text-stroke:.3px #1c84c6;">21</span>
<span class="t" style="left:1486.72px;top:498px;font-size:14px;color:#cdcdcd;-webkit-text-stroke:.3px #cdcdcd;">0</span>
<span class="t" style="left:1610.65px;top:498px;font-size:14px;color:#cdcdcd;-webkit-text-stroke:.3px #cdcdcd;">0</span>
<span class="t" style="left:1734.58px;top:498px;font-size:14px;color:#cdcdcd;-webkit-text-stroke:.3px #cdcdcd;">0</span>
<span class="t" style="left:1858.51px;top:498px;font-size:14px;color:#cdcdcd;-webkit-text-stroke:.3px #cdcdcd;">0</span>
<div style="position:absolute;left:879px;top:526px;width:1px;height:30.6px;background:#d9d9d9"></div>
<div style="position:absolute;left:1004px;top:526px;width:1px;height:30.6px;background:#d9d9d9"></div>
<div style="position:absolute;left:1128px;top:526px;width:1px;height:30.6px;background:#d9d9d9"></div>
<div style="position:absolute;left:1251px;top:526px;width:1px;height:30.6px;background:#d9d9d9"></div>
<div style="position:absolute;left:1375px;top:526px;width:1px;height:30.6px;background:#d9d9d9"></div>
<div style="position:absolute;left:1500px;top:526px;width:1px;height:30.6px;background:#d9d9d9"></div>
<div style="position:absolute;left:1624px;top:526px;width:1px;height:30.6px;background:#d9d9d9"></div>
<div style="position:absolute;left:1747px;top:526px;width:1px;height:30.6px;background:#d9d9d9"></div>
<span class="t" style="left:24.40px;top:534px;font-size:14px;color:#616466;-webkit-text-stroke:.3px #616466;letter-spacing:-0.349px;">sr_R10</span>
<span class="t" style="left:983.21px;top:534px;font-size:14px;color:#1ab394;-webkit-text-stroke:.3px #1ab394;">35</span>
<span class="t" style="left:1114.93px;top:534px;font-size:14px;color:#cdcdcd;-webkit-text-stroke:.3px #cdcdcd;">0</span>
<span class="t" style="left:1238.86px;top:534px;font-size:14px;color:#cdcdcd;-webkit-text-stroke:.3px #cdcdcd;">0</span>
<span class="t" style="left:1355.00px;top:534px;font-size:14px;color:#1c84c6;-webkit-text-stroke:.3px #1c84c6;">35</span>
<span class="t" style="left:1486.72px;top:534px;font-size:14px;color:#cdcdcd;-webkit-text-stroke:.3px #cdcdcd;">0</span>
<span class="t" style="left:1610.65px;top:534px;font-size:14px;color:#cdcdcd;-webkit-text-stroke:.3px #cdcdcd;">0</span>
<span class="t" style="left:1734.58px;top:534px;font-size:14px;color:#cdcdcd;-webkit-text-stroke:.3px #cdcdcd;">0</span>
<span class="t" style="left:1858.51px;top:534px;font-size:14px;color:#cdcdcd;-webkit-text-stroke:.3px #cdcdcd;">0</span>
<div style="position:absolute;left:879px;top:561px;width:1px;height:30.6px;background:#d9d9d9"></div>
<div style="position:absolute;left:1004px;top:561px;width:1px;height:30.6px;background:#d9d9d9"></div>
<div style="position:absolute;left:1128px;top:561px;width:1px;height:30.6px;background:#d9d9d9"></div>
<div style="position:absolute;left:1251px;top:561px;width:1px;height:30.6px;background:#d9d9d9"></div>
<div style="position:absolute;left:1375px;top:561px;width:1px;height:30.6px;background:#d9d9d9"></div>
<div style="position:absolute;left:1500px;top:561px;width:1px;height:30.6px;background:#d9d9d9"></div>
<div style="position:absolute;left:1624px;top:561px;width:1px;height:30.6px;background:#d9d9d9"></div>
<div style="position:absolute;left:1747px;top:561px;width:1px;height:30.6px;background:#d9d9d9"></div>
<span class="t" style="left:24.40px;top:569px;font-size:14px;color:#616466;-webkit-text-stroke:.3px #616466;letter-spacing:-0.261px;">sr_R11</span>
<span class="t" style="left:991.00px;top:569px;font-size:14px;color:#1ab394;-webkit-text-stroke:.3px #1ab394;">5</span>
<span class="t" style="left:1114.93px;top:569px;font-size:14px;color:#e30b17;-webkit-text-stroke:.3px #e30b17;">1</span>
<span class="t" style="left:1238.86px;top:569px;font-size:14px;color:#cdcdcd;-webkit-text-stroke:.3px #cdcdcd;">0</span>
<span class="t" style="left:1362.79px;top:569px;font-size:14px;color:#1c84c6;-webkit-text-stroke:.3px #1c84c6;">5</span>
<span class="t" style="left:1486.72px;top:569px;font-size:14px;color:#cdcdcd;-webkit-text-stroke:.3px #cdcdcd;">0</span>
<span class="t" style="left:1610.65px;top:569px;font-size:14px;color:#cdcdcd;-webkit-text-stroke:.3px #cdcdcd;">0</span>
<span class="t" style="left:1734.58px;top:569px;font-size:14px;color:#cdcdcd;-webkit-text-stroke:.3px #cdcdcd;">0</span>
<span class="t" style="left:1858.51px;top:569px;font-size:14px;color:#cdcdcd;-webkit-text-stroke:.3px #cdcdcd;">0</span>
<div style="position:absolute;left:879px;top:596px;width:1px;height:30.6px;background:#d9d9d9"></div>
<div style="position:absolute;left:1004px;top:596px;width:1px;height:30.6px;background:#d9d9d9"></div>
<div style="position:absolute;left:1128px;top:596px;width:1px;height:30.6px;background:#d9d9d9"></div>
<div style="position:absolute;left:1251px;top:596px;width:1px;height:30.6px;background:#d9d9d9"></div>
<div style="position:absolute;left:1375px;top:596px;width:1px;height:30.6px;background:#d9d9d9"></div>
<div style="position:absolute;left:1500px;top:596px;width:1px;height:30.6px;background:#d9d9d9"></div>
<div style="position:absolute;left:1624px;top:596px;width:1px;height:30.6px;background:#d9d9d9"></div>
<div style="position:absolute;left:1747px;top:596px;width:1px;height:30.6px;background:#d9d9d9"></div>
<span class="t" style="left:24.40px;top:604px;font-size:14px;color:#616466;-webkit-text-stroke:.3px #616466;letter-spacing:-0.490px;">sr_R2</span>
<span class="t" style="left:983.21px;top:604px;font-size:14px;color:#1ab394;-webkit-text-stroke:.3px #1ab394;">56</span>
<span class="t" style="left:1107.14px;top:604px;font-size:14px;color:#e30b17;-webkit-text-stroke:.3px #e30b17;">15</span>
<span class="t" style="left:1238.86px;top:604px;font-size:14px;color:#cdcdcd;-webkit-text-stroke:.3px #cdcdcd;">0</span>
<span class="t" style="left:1355.00px;top:604px;font-size:14px;color:#1c84c6;-webkit-text-stroke:.3px #1c84c6;">56</span>
<span class="t" style="left:1486.72px;top:604px;font-size:14px;color:#cdcdcd;-webkit-text-stroke:.3px #cdcdcd;">0</span>
<span class="t" style="left:1610.65px;top:604px;font-size:14px;color:#cdcdcd;-webkit-text-stroke:.3px #cdcdcd;">0</span>
<span class="t" style="left:1734.58px;top:604px;font-size:14px;color:#cdcdcd;-webkit-text-stroke:.3px #cdcdcd;">0</span>
<span class="t" style="left:1858.51px;top:604px;font-size:14px;color:#cdcdcd;-webkit-text-stroke:.3px #cdcdcd;">0</span>
<div style="position:absolute;left:879px;top:631px;width:1px;height:30.6px;background:#d9d9d9"></div>
<div style="position:absolute;left:1004px;top:631px;width:1px;height:30.6px;background:#d9d9d9"></div>
<div style="position:absolute;left:1128px;top:631px;width:1px;height:30.6px;background:#d9d9d9"></div>
<div style="position:absolute;left:1251px;top:631px;width:1px;height:30.6px;background:#d9d9d9"></div>
<div style="position:absolute;left:1375px;top:631px;width:1px;height:30.6px;background:#d9d9d9"></div>
<div style="position:absolute;left:1500px;top:631px;width:1px;height:30.6px;background:#d9d9d9"></div>
<div style="position:absolute;left:1624px;top:631px;width:1px;height:30.6px;background:#d9d9d9"></div>
<div style="position:absolute;left:1747px;top:631px;width:1px;height:30.6px;background:#d9d9d9"></div>
<span class="t" style="left:24.40px;top:639px;font-size:14px;color:#616466;-webkit-text-stroke:.3px #616466;letter-spacing:-0.490px;">sr_R3</span>
<span class="t" style="left:983.21px;top:639px;font-size:14px;color:#1ab394;-webkit-text-stroke:.3px #1ab394;">66</span>
<span class="t" style="left:1107.14px;top:639px;font-size:14px;color:#e30b17;-webkit-text-stroke:.3px #e30b17;">12</span>
<span class="t" style="left:1238.86px;top:639px;font-size:14px;color:#cdcdcd;-webkit-text-stroke:.3px #cdcdcd;">0</span>
<span class="t" style="left:1355.00px;top:639px;font-size:14px;color:#1c84c6;-webkit-text-stroke:.3px #1c84c6;">66</span>
<span class="t" style="left:1486.72px;top:639px;font-size:14px;color:#cdcdcd;-webkit-text-stroke:.3px #cdcdcd;">0</span>
<span class="t" style="left:1610.65px;top:639px;font-size:14px;color:#cdcdcd;-webkit-text-stroke:.3px #cdcdcd;">0</span>
<span class="t" style="left:1734.58px;top:639px;font-size:14px;color:#cdcdcd;-webkit-text-stroke:.3px #cdcdcd;">0</span>
<span class="t" style="left:1858.51px;top:639px;font-size:14px;color:#cdcdcd;-webkit-text-stroke:.3px #cdcdcd;">0</span>
<div style="position:absolute;left:879px;top:666px;width:1px;height:30.6px;background:#d9d9d9"></div>
<div style="position:absolute;left:1004px;top:666px;width:1px;height:30.6px;background:#d9d9d9"></div>
<div style="position:absolute;left:1128px;top:666px;width:1px;height:30.6px;background:#d9d9d9"></div>
<div style="position:absolute;left:1251px;top:666px;width:1px;height:30.6px;background:#d9d9d9"></div>
<div style="position:absolute;left:1375px;top:666px;width:1px;height:30.6px;background:#d9d9d9"></div>
<div style="position:absolute;left:1500px;top:666px;width:1px;height:30.6px;background:#d9d9d9"></div>
<div style="position:absolute;left:1624px;top:666px;width:1px;height:30.6px;background:#d9d9d9"></div>
<div style="position:absolute;left:1747px;top:666px;width:1px;height:30.6px;background:#d9d9d9"></div>
<span class="t" style="left:24.40px;top:674px;font-size:14px;color:#616466;-webkit-text-stroke:.3px #616466;letter-spacing:-0.440px;">sr_R4</span>
<span class="t" style="left:983.21px;top:674px;font-size:14px;color:#1ab394;-webkit-text-stroke:.3px #1ab394;">20</span>
<span class="t" style="left:1114.93px;top:674px;font-size:14px;color:#cdcdcd;-webkit-text-stroke:.3px #cdcdcd;">0</span>
<span class="t" style="left:1238.86px;top:674px;font-size:14px;color:#cdcdcd;-webkit-text-stroke:.3px #cdcdcd;">0</span>
<span class="t" style="left:1355.00px;top:674px;font-size:14px;color:#1c84c6;-webkit-text-stroke:.3px #1c84c6;">20</span>
<span class="t" style="left:1486.72px;top:674px;font-size:14px;color:#cdcdcd;-webkit-text-stroke:.3px #cdcdcd;">0</span>
<span class="t" style="left:1610.65px;top:674px;font-size:14px;color:#cdcdcd;-webkit-text-stroke:.3px #cdcdcd;">0</span>
<span class="t" style="left:1734.58px;top:674px;font-size:14px;color:#cdcdcd;-webkit-text-stroke:.3px #cdcdcd;">0</span>
<span class="t" style="left:1858.51px;top:674px;font-size:14px;color:#cdcdcd;-webkit-text-stroke:.3px #cdcdcd;">0</span>
<div style="position:absolute;left:879px;top:701px;width:1px;height:30.6px;background:#d9d9d9"></div>
<div style="position:absolute;left:1004px;top:701px;width:1px;height:30.6px;background:#d9d9d9"></div>
<div style="position:absolute;left:1128px;top:701px;width:1px;height:30.6px;background:#d9d9d9"></div>
<div style="position:absolute;left:1251px;top:701px;width:1px;height:30.6px;background:#d9d9d9"></div>
<div style="position:absolute;left:1375px;top:701px;width:1px;height:30.6px;background:#d9d9d9"></div>
<div style="position:absolute;left:1500px;top:701px;width:1px;height:30.6px;background:#d9d9d9"></div>
<div style="position:absolute;left:1624px;top:701px;width:1px;height:30.6px;background:#d9d9d9"></div>
<div style="position:absolute;left:1747px;top:701px;width:1px;height:30.6px;background:#d9d9d9"></div>
<span class="t" style="left:24.40px;top:709px;font-size:14px;color:#616466;-webkit-text-stroke:.3px #616466;letter-spacing:-0.490px;">sr_R5</span>
<span class="t" style="left:983.21px;top:709px;font-size:14px;color:#1ab394;-webkit-text-stroke:.3px #1ab394;">46</span>
<span class="t" style="left:1114.93px;top:709px;font-size:14px;color:#e30b17;-webkit-text-stroke:.3px #e30b17;">3</span>
<span class="t" style="left:1238.86px;top:709px;font-size:14px;color:#cdcdcd;-webkit-text-stroke:.3px #cdcdcd;">0</span>
<span class="t" style="left:1355.00px;top:709px;font-size:14px;color:#1c84c6;-webkit-text-stroke:.3px #1c84c6;">46</span>
<span class="t" style="left:1486.72px;top:709px;font-size:14px;color:#cdcdcd;-webkit-text-stroke:.3px #cdcdcd;">0</span>
<span class="t" style="left:1610.65px;top:709px;font-size:14px;color:#cdcdcd;-webkit-text-stroke:.3px #cdcdcd;">0</span>
<span class="t" style="left:1734.58px;top:709px;font-size:14px;color:#cdcdcd;-webkit-text-stroke:.3px #cdcdcd;">0</span>
<span class="t" style="left:1858.51px;top:709px;font-size:14px;color:#cdcdcd;-webkit-text-stroke:.3px #cdcdcd;">0</span>
<div style="position:absolute;left:879px;top:736px;width:1px;height:30.6px;background:#d9d9d9"></div>
<div style="position:absolute;left:1004px;top:736px;width:1px;height:30.6px;background:#d9d9d9"></div>
<div style="position:absolute;left:1128px;top:736px;width:1px;height:30.6px;background:#d9d9d9"></div>
<div style="position:absolute;left:1251px;top:736px;width:1px;height:30.6px;background:#d9d9d9"></div>
<div style="position:absolute;left:1375px;top:736px;width:1px;height:30.6px;background:#d9d9d9"></div>
<div style="position:absolute;left:1500px;top:736px;width:1px;height:30.6px;background:#d9d9d9"></div>
<div style="position:absolute;left:1624px;top:736px;width:1px;height:30.6px;background:#d9d9d9"></div>
<div style="position:absolute;left:1747px;top:736px;width:1px;height:30.6px;background:#d9d9d9"></div>
<span class="t" style="left:24.40px;top:744px;font-size:14px;color:#616466;-webkit-text-stroke:.3px #616466;letter-spacing:-0.490px;">sr_R6</span>
<span class="t" style="left:983.21px;top:744px;font-size:14px;color:#1ab394;-webkit-text-stroke:.3px #1ab394;">34</span>
<span class="t" style="left:1114.93px;top:744px;font-size:14px;color:#e30b17;-webkit-text-stroke:.3px #e30b17;">4</span>
<span class="t" style="left:1238.86px;top:744px;font-size:14px;color:#cdcdcd;-webkit-text-stroke:.3px #cdcdcd;">0</span>
<span class="t" style="left:1355.00px;top:744px;font-size:14px;color:#1c84c6;-webkit-text-stroke:.3px #1c84c6;">34</span>
<span class="t" style="left:1486.72px;top:744px;font-size:14px;color:#cdcdcd;-webkit-text-stroke:.3px #cdcdcd;">0</span>
<span class="t" style="left:1610.65px;top:744px;font-size:14px;color:#cdcdcd;-webkit-text-stroke:.3px #cdcdcd;">0</span>
<span class="t" style="left:1734.58px;top:744px;font-size:14px;color:#cdcdcd;-webkit-text-stroke:.3px #cdcdcd;">0</span>
<span class="t" style="left:1858.51px;top:744px;font-size:14px;color:#cdcdcd;-webkit-text-stroke:.3px #cdcdcd;">0</span>
<div style="position:absolute;left:879px;top:771px;width:1px;height:30.6px;background:#d9d9d9"></div>
<div style="position:absolute;left:1004px;top:771px;width:1px;height:30.6px;background:#d9d9d9"></div>
<div style="position:absolute;left:1128px;top:771px;width:1px;height:30.6px;background:#d9d9d9"></div>
<div style="position:absolute;left:1251px;top:771px;width:1px;height:30.6px;background:#d9d9d9"></div>
<div style="position:absolute;left:1375px;top:771px;width:1px;height:30.6px;background:#d9d9d9"></div>
<div style="position:absolute;left:1500px;top:771px;width:1px;height:30.6px;background:#d9d9d9"></div>
<div style="position:absolute;left:1624px;top:771px;width:1px;height:30.6px;background:#d9d9d9"></div>
<div style="position:absolute;left:1747px;top:771px;width:1px;height:30.6px;background:#d9d9d9"></div>
<span class="t" style="left:24.40px;top:779px;font-size:14px;color:#616466;-webkit-text-stroke:.3px #616466;letter-spacing:-0.490px;">sr_R7</span>
<span class="t" style="left:991.00px;top:779px;font-size:14px;color:#1ab394;-webkit-text-stroke:.3px #1ab394;">9</span>
<span class="t" style="left:1114.93px;top:779px;font-size:14px;color:#e30b17;-webkit-text-stroke:.3px #e30b17;">1</span>
<span class="t" style="left:1238.86px;top:779px;font-size:14px;color:#cdcdcd;-webkit-text-stroke:.3px #cdcdcd;">0</span>
<span class="t" style="left:1362.79px;top:779px;font-size:14px;color:#1c84c6;-webkit-text-stroke:.3px #1c84c6;">9</span>
<span class="t" style="left:1486.72px;top:779px;font-size:14px;color:#cdcdcd;-webkit-text-stroke:.3px #cdcdcd;">0</span>
<span class="t" style="left:1610.65px;top:779px;font-size:14px;color:#cdcdcd;-webkit-text-stroke:.3px #cdcdcd;">0</span>
<span class="t" style="left:1734.58px;top:779px;font-size:14px;color:#cdcdcd;-webkit-text-stroke:.3px #cdcdcd;">0</span>
<span class="t" style="left:1858.51px;top:779px;font-size:14px;color:#cdcdcd;-webkit-text-stroke:.3px #cdcdcd;">0</span>
<div style="position:absolute;left:879px;top:806px;width:1px;height:30.6px;background:#d9d9d9"></div>
<div style="position:absolute;left:1004px;top:806px;width:1px;height:30.6px;background:#d9d9d9"></div>
<div style="position:absolute;left:1128px;top:806px;width:1px;height:30.6px;background:#d9d9d9"></div>
<div style="position:absolute;left:1251px;top:806px;width:1px;height:30.6px;background:#d9d9d9"></div>
<div style="position:absolute;left:1375px;top:806px;width:1px;height:30.6px;background:#d9d9d9"></div>
<div style="position:absolute;left:1500px;top:806px;width:1px;height:30.6px;background:#d9d9d9"></div>
<div style="position:absolute;left:1624px;top:806px;width:1px;height:30.6px;background:#d9d9d9"></div>
<div style="position:absolute;left:1747px;top:806px;width:1px;height:30.6px;background:#d9d9d9"></div>
<span class="t" style="left:24.40px;top:814px;font-size:14px;color:#616466;-webkit-text-stroke:.3px #616466;letter-spacing:-0.490px;">sr_R8</span>
<span class="t" style="left:991.00px;top:814px;font-size:14px;color:#1ab394;-webkit-text-stroke:.3px #1ab394;">7</span>
<span class="t" style="left:1114.93px;top:814px;font-size:14px;color:#e30b17;-webkit-text-stroke:.3px #e30b17;">1</span>
<span class="t" style="left:1238.86px;top:814px;font-size:14px;color:#cdcdcd;-webkit-text-stroke:.3px #cdcdcd;">0</span>
<span class="t" style="left:1362.79px;top:814px;font-size:14px;color:#1c84c6;-webkit-text-stroke:.3px #1c84c6;">7</span>
<span class="t" style="left:1486.72px;top:814px;font-size:14px;color:#cdcdcd;-webkit-text-stroke:.3px #cdcdcd;">0</span>
<span class="t" style="left:1610.65px;top:814px;font-size:14px;color:#cdcdcd;-webkit-text-stroke:.3px #cdcdcd;">0</span>
<span class="t" style="left:1734.58px;top:814px;font-size:14px;color:#cdcdcd;-webkit-text-stroke:.3px #cdcdcd;">0</span>
<span class="t" style="left:1858.51px;top:814px;font-size:14px;color:#cdcdcd;-webkit-text-stroke:.3px #cdcdcd;">0</span>
<div style="position:absolute;left:879px;top:841px;width:1px;height:30.6px;background:#d9d9d9"></div>
<div style="position:absolute;left:1004px;top:841px;width:1px;height:30.6px;background:#d9d9d9"></div>
<div style="position:absolute;left:1128px;top:841px;width:1px;height:30.6px;background:#d9d9d9"></div>
<div style="position:absolute;left:1251px;top:841px;width:1px;height:30.6px;background:#d9d9d9"></div>
<div style="position:absolute;left:1375px;top:841px;width:1px;height:30.6px;background:#d9d9d9"></div>
<div style="position:absolute;left:1500px;top:841px;width:1px;height:30.6px;background:#d9d9d9"></div>
<div style="position:absolute;left:1624px;top:841px;width:1px;height:30.6px;background:#d9d9d9"></div>
<div style="position:absolute;left:1747px;top:841px;width:1px;height:30.6px;background:#d9d9d9"></div>
<span class="t" style="left:24.40px;top:849px;font-size:14px;color:#616466;-webkit-text-stroke:.3px #616466;letter-spacing:-0.490px;">sr_R9</span>
<span class="t" style="left:983.21px;top:849px;font-size:14px;color:#1ab394;-webkit-text-stroke:.3px #1ab394;">25</span>
<span class="t" style="left:1107.14px;top:849px;font-size:14px;color:#e30b17;-webkit-text-stroke:.3px #e30b17;">12</span>
<span class="t" style="left:1238.86px;top:849px;font-size:14px;color:#cdcdcd;-webkit-text-stroke:.3px #cdcdcd;">0</span>
<span class="t" style="left:1355.00px;top:849px;font-size:14px;color:#1c84c6;-webkit-text-stroke:.3px #1c84c6;">25</span>
<span class="t" style="left:1486.72px;top:849px;font-size:14px;color:#cdcdcd;-webkit-text-stroke:.3px #cdcdcd;">0</span>
<span class="t" style="left:1610.65px;top:849px;font-size:14px;color:#cdcdcd;-webkit-text-stroke:.3px #cdcdcd;">0</span>
<span class="t" style="left:1734.58px;top:849px;font-size:14px;color:#cdcdcd;-webkit-text-stroke:.3px #cdcdcd;">0</span>
<span class="t" style="left:1858.51px;top:849px;font-size:14px;color:#cdcdcd;-webkit-text-stroke:.3px #cdcdcd;">0</span>
<div style="position:absolute;left:879px;top:876px;width:1px;height:30.6px;background:#d9d9d9"></div>
<div style="position:absolute;left:1004px;top:876px;width:1px;height:30.6px;background:#d9d9d9"></div>
<div style="position:absolute;left:1128px;top:876px;width:1px;height:30.6px;background:#d9d9d9"></div>
<div style="position:absolute;left:1251px;top:876px;width:1px;height:30.6px;background:#d9d9d9"></div>
<div style="position:absolute;left:1375px;top:876px;width:1px;height:30.6px;background:#d9d9d9"></div>
<div style="position:absolute;left:1500px;top:876px;width:1px;height:30.6px;background:#d9d9d9"></div>
<div style="position:absolute;left:1624px;top:876px;width:1px;height:30.6px;background:#d9d9d9"></div>
<div style="position:absolute;left:1747px;top:876px;width:1px;height:30.6px;background:#d9d9d9"></div>
<span class="t" style="left:24.40px;top:884px;font-size:14px;color:#616466;-webkit-text-stroke:.3px #616466;letter-spacing:0.380px;">sr_sved_purcb</span>
<span class="t" style="left:991.00px;top:884px;font-size:14px;color:#1ab394;-webkit-text-stroke:.3px #1ab394;">9</span>
<span class="t" style="left:1114.93px;top:884px;font-size:14px;color:#cdcdcd;-webkit-text-stroke:.3px #cdcdcd;">0</span>
<span class="t" style="left:1238.86px;top:884px;font-size:14px;color:#cdcdcd;-webkit-text-stroke:.3px #cdcdcd;">0</span>
<span class="t" style="left:1362.79px;top:884px;font-size:14px;color:#1c84c6;-webkit-text-stroke:.3px #1c84c6;">9</span>
<span class="t" style="left:1486.72px;top:884px;font-size:14px;color:#cdcdcd;-webkit-text-stroke:.3px #cdcdcd;">0</span>
<span class="t" style="left:1610.65px;top:884px;font-size:14px;color:#cdcdcd;-webkit-text-stroke:.3px #cdcdcd;">0</span>
<span class="t" style="left:1734.58px;top:884px;font-size:14px;color:#cdcdcd;-webkit-text-stroke:.3px #cdcdcd;">0</span>
<span class="t" style="left:1858.51px;top:884px;font-size:14px;color:#cdcdcd;-webkit-text-stroke:.3px #cdcdcd;">0</span>
<div style="position:absolute;left:1871px;top:488px;width:14px;height:523.5px;background:#fafafa"></div>
<svg style="left:1872px;top:493px" width="12" height="7"><path d="M1 5.6 L6 0.6 L11 5.6 Z" fill="#8a8a8a"/></svg>
<svg style="left:1872px;top:1000.6px" width="12" height="7"><path d="M1 0.6 L6 5.6 L11 0.6 Z" fill="#8a8a8a"/></svg>
<div style="position:absolute;left:19px;top:1011.8px;width:1866px;height:1.2px;background:#cfcfcf"></div>
<div style="position:absolute;left:1871px;top:1013px;width:14px;height:34.5px;background:#fafafa"></div>
<svg style="left:1872px;top:1017.4px" width="12" height="7"><path d="M1 5.6 L6 0.6 L11 5.6 Z" fill="#8a8a8a"/></svg>
<svg style="left:1872px;top:1036.6px" width="12" height="7"><path d="M1 0.6 L6 5.6 L11 0.6 Z" fill="#8a8a8a"/></svg>
<div style="position:absolute;left:879px;top:1015px;width:1px;height:31px;background:#d9d9d9"></div>
<div style="position:absolute;left:1004px;top:1015px;width:1px;height:31px;background:#d9d9d9"></div>
<div style="position:absolute;left:1128px;top:1015px;width:1px;height:31px;background:#d9d9d9"></div>
<div style="position:absolute;left:1251px;top:1015px;width:1px;height:31px;background:#d9d9d9"></div>
<div style="position:absolute;left:1375px;top:1015px;width:1px;height:31px;background:#d9d9d9"></div>
<div style="position:absolute;left:1500px;top:1015px;width:1px;height:31px;background:#d9d9d9"></div>
<div style="position:absolute;left:1624px;top:1015px;width:1px;height:31px;background:#d9d9d9"></div>
<div style="position:absolute;left:1747px;top:1015px;width:1px;height:31px;background:#d9d9d9"></div>
<span class="t" style="left:23.40px;top:1022px;font-size:15.5px;color:#616466;-webkit-text-stroke:.3px #616466;letter-spacing:0.240px;">Итого по всем таблицам</span>
<span class="t" style="left:974.32px;top:1022px;font-size:15px;color:#1ab394;-webkit-text-stroke:.3px #1ab394;">333</span>
<span class="t" style="left:1106.59px;top:1022px;font-size:15px;color:#e30b17;-webkit-text-stroke:.3px #e30b17;">56</span>
<span class="t" style="left:1238.86px;top:1022px;font-size:15px;color:#cdcdcd;-webkit-text-stroke:.3px #cdcdcd;">0</span>
<span class="t" style="left:1346.11px;top:1022px;font-size:15px;color:#1c84c6;-webkit-text-stroke:.3px #1c84c6;">333</span>
<span class="t" style="left:1486.72px;top:1022px;font-size:15px;color:#616466;-webkit-text-stroke:.3px #616466;">0</span>
<span class="t" style="left:1610.65px;top:1022px;font-size:15px;color:#616466;-webkit-text-stroke:.3px #616466;">0</span>
<span class="t" style="left:1734.58px;top:1022px;font-size:15px;color:#616466;-webkit-text-stroke:.3px #616466;">0</span>
<span class="t" style="left:1858.51px;top:1022px;font-size:15px;color:#616466;-webkit-text-stroke:.3px #616466;">0</span>
</div>
</body></html>
